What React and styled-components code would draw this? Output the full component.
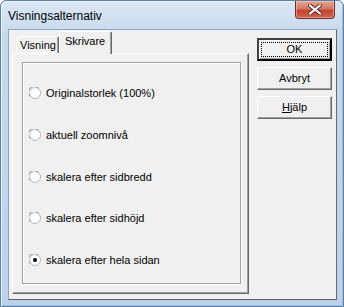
import React from 'react';
import styled, { createGlobalStyle, css } from 'styled-components';

const GlobalStyle = createGlobalStyle`
  body {
    margin: 0;
    background: #ffffff;
    font-family: "Liberation Sans", Arial, sans-serif;
  }
`;

const options = [
  'Originalstorlek (100%)',
  'aktuell zoomnivå',
  'skalera efter sidbredd',
  'skalera efter sidhöjd',
  'skalera efter hela sidan',
];

const Radio = ({ checked }) => (
  <RadioIcon width="12" height="12" viewBox="0 0 12 12">
    <circle cx="6" cy="6" r="5.5" fill="#ffffff" stroke="#b4b4b4" strokeWidth="1" />
    <path d="M1.9 8.6 A4.6 4.6 0 0 1 8.6 1.9" fill="none" stroke="#dcdcdc" strokeWidth="1" />
    <path d="M1.1 9.4 A5.5 5.5 0 0 1 9.4 1.1" fill="none" stroke="#8c8c8c" strokeWidth="1" />
    {checked && <circle cx="6" cy="6" r="2" fill="#000000" />}
  </RadioIcon>
);

const CloseGlyph = () => (
  <svg width="14" height="11" viewBox="0 0 14 11">
    <path d="M2 1.5 L12 9.5 M12 1.5 L2 9.5" stroke="#5a2a26" strokeWidth="4" strokeLinecap="square" />
    <path d="M2 1.5 L12 9.5 M12 1.5 L2 9.5" stroke="#ffffff" strokeWidth="2" strokeLinecap="square" />
  </svg>
);

export default function App() {
  return (
    <>
      <GlobalStyle />
      <Window>
        <TitleBar>
          <Title>Visningsalternativ</Title>
          <CloseButton><CloseGlyph /></CloseButton>
        </TitleBar>
        <Client>
          <TabArea>
            <TabStrip>
              <Tab>Visning</Tab>
              <Tab active>Skrivare</Tab>
            </TabStrip>
            <Panel>
              <GroupBox>
                {options.map((label, i) => (
                  <OptionRow key={label}>
                    <Radio checked={i === options.length - 1} />
                    <span>{label}</span>
                  </OptionRow>
                ))}
              </GroupBox>
            </Panel>
          </TabArea>
          <ButtonColumn>
            <DialogButton isDefault>
              <FocusRect>OK</FocusRect>
            </DialogButton>
            <DialogButton>Avbryt</DialogButton>
            <DialogButton><u>H</u>jälp</DialogButton>
          </ButtonColumn>
        </Client>
      </Window>
    </>
  );
}

const Window = styled.div`
  width: 344px;
  height: 307px;
  box-sizing: border-box;
  border: 1px solid #5b7fa6;
  border-radius: 6px 6px 0 0;
  background: linear-gradient(180deg, #dbe7f4 0%, #c6d8ec 12%, #bcd2ea 100%);
  padding: 0 6px 6px 7px;
  display: flex;
  flex-direction: column;
  box-shadow: inset 1px 1px 0 #eef4fb, inset -1px -1px 0 #9fc0e0;
`;

const TitleBar = styled.div`
  height: 28px;
  display: flex;
  align-items: flex-start;
  flex-shrink: 0;
`;

const Title = styled.div`
  padding-top: 8px;
  font-size: 12px;
  line-height: 14px;
  color: #000000;
`;

const CloseButton = styled.div`
  margin-left: auto;
  margin-right: 2px;
  width: 40px;
  height: 18px;
  box-sizing: border-box;
  border: 1px solid #6b2e2a;
  border-top: 0;
  border-radius: 0 0 4px 4px;
  background: linear-gradient(180deg, #e8a493 0%, #d27a68 45%, #c3442f 55%, #d2624c 100%);
  box-shadow: inset 0 0 0 1px rgba(255, 220, 210, 0.45);
  display: flex;
  align-items: center;
  justify-content: center;
`;

const Client = styled.div`
  flex: 1;
  box-sizing: border-box;
  background: #f0f0f0;
  border: 1px solid;
  border-color: #8ea5bf #6a6a6a #5e5e5e #8ea5bf;
  display: flex;
  padding: 1px 0 5px 3px;
  font-size: 11px;
  color: #000000;
`;

const TabArea = styled.div`
  width: 237px;
  display: flex;
  flex-direction: column;
`;

const TabStrip = styled.div`
  height: 22px;
  display: flex;
  align-items: flex-end;
  padding-left: 4px;
  position: relative;
  z-index: 1;
`;

const Tab = styled.div`
  height: 17px;
  box-sizing: border-box;
  padding: 2px 2px 0 3px;
  line-height: 13px;
  border-top: 1px solid #ffffff;
  border-left: 1px solid #ffffff;
  border-right: 1px solid #696969;
  border-radius: 2px 2px 0 0;
  box-shadow: inset -1px 0 0 #a0a0a0;
  background: #f0f0f0;

  ${(p) =>
    p.active &&
    css`
      height: 23px;
      margin-bottom: -1px;
      padding: 3px 6px 0 5px;
    `}
`;

const Panel = styled.div`
  flex: 1;
  box-sizing: border-box;
  border-top: 1px solid #ffffff;
  border-left: 1px solid #ffffff;
  border-right: 1px solid #696969;
  border-bottom: 1px solid #696969;
  box-shadow: inset -1px -1px 0 #a0a0a0;
  padding: 8px 7px 9px 9px;
  display: flex;
`;

const GroupBox = styled.div`
  flex: 1;
  border: 1px solid #a0a0a0;
  box-shadow: inset 1px 1px 0 #ffffff, 1px 1px 0 #ffffff;
  padding: 23px 0 0 6px;
  display: flex;
  flex-direction: column;
  gap: 27.75px;
`;

const OptionRow = styled.div`
  display: flex;
  align-items: center;
  gap: 5px;
  height: 14px;
  line-height: 14px;
`;

const RadioIcon = styled.svg`
  flex-shrink: 0;
`;

const ButtonColumn = styled.div`
  margin-left: 8px;
  padding-top: 7px;
  display: flex;
  flex-direction: column;
  gap: 6px;
`;

const DialogButton = styled.div`
  width: 75px;
  height: 23px;
  box-sizing: border-box;
  border-top: 1px solid #ffffff;
  border-left: 1px solid #ffffff;
  border-right: 1px solid #696969;
  border-bottom: 1px solid #696969;
  box-shadow: inset -1px -1px 0 #a0a0a0;
  background: #f0f0f0;
  display: flex;
  align-items: center;
  justify-content: center;
  line-height: 13px;

  ${(p) =>
    p.isDefault &&
    css`
      border: 2px solid #000000;
      border-color: #404040 #000000 #000000 #404040;
      box-shadow: inset 1px 1px 0 #ffffff, inset -1px -1px 0 #a0a0a0;
      padding: 2px;
    `}
`;

const FocusRect = styled.div`
  width: 100%;
  height: 100%;
  box-sizing: border-box;
  border: 1px dotted #000000;
  display: flex;
  align-items: center;
  justify-content: center;
`;
